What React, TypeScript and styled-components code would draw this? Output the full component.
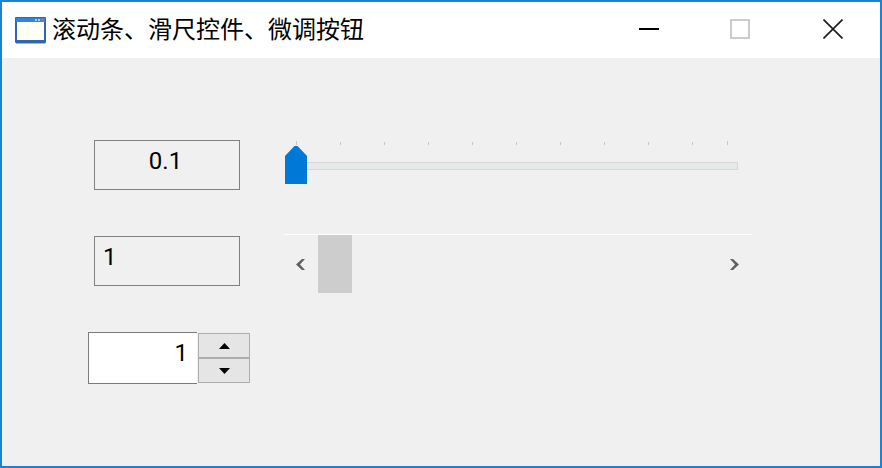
import React from "react";
import styled, { createGlobalStyle } from "styled-components";

const GlobalStyle = createGlobalStyle`
  html, body {
    margin: 0;
    padding: 0;
    background: #f0f0f0;
  }
  * {
    box-sizing: border-box;
  }
`;

const Frame = styled.div`
  width: 882px;
  height: 468px;
  border: 2px solid #1883d7;
  background: #f0f0f0;
  font-family: "Liberation Sans", "Noto Sans CJK SC", sans-serif;
  color: #000;
  display: flex;
  flex-direction: column;
`;

const TitleBar = styled.div`
  height: 56px;
  background: #fff;
  display: flex;
  align-items: center;
  padding: 0 1px 0 13px;
  flex-shrink: 0;
`;

const Title = styled.div`
  font-size: 24px;
  margin-left: 6px;
  flex: 1;
  line-height: 56px;
  white-space: nowrap;
`;

const Caption = styled.div<{ $width: number }>`
  width: ${(p) => p.$width}px;
  height: 56px;
  padding-bottom: 2px;
  display: flex;
  align-items: center;
  justify-content: center;
`;

const Client = styled.div`
  flex: 1;
  padding-top: 82px;
  display: flex;
  flex-direction: column;
`;

const Row = styled.div<{ $height: number }>`
  display: flex;
  height: ${(p) => p.$height}px;
`;

const Readout = styled.div<{ $center?: boolean }>`
  width: 146px;
  height: 50px;
  margin-left: 92px;
  border: 1px solid #808080;
  font-family: Roboto, "Liberation Sans", sans-serif;
  font-size: 24px;
  line-height: 40px;
  padding: ${(p) => (p.$center ? "0 3px 0 0" : "0 0 0 8px")};
  text-align: ${(p) => (p.$center ? "center" : "left")};
`;

const Slider = styled.div`
  position: relative;
  width: 453px;
  height: 50px;
  margin-left: 45px;
`;

const Tick = styled.span<{ $tall?: boolean }>`
  position: absolute;
  top: ${(p) => (p.$tall ? 1 : 2)}px;
  width: 1px;
  height: ${(p) => (p.$tall ? 4 : 3)}px;
  background: #c8c8c8;
`;

const Track = styled.div`
  position: absolute;
  left: 0;
  right: 0;
  top: 22px;
  height: 8px;
  background: #e7eaea;
  border: 1px solid #d6d6d6;
`;

const Thumb = styled.svg`
  position: absolute;
  left: 0;
  top: 5px;
  display: block;
`;

const ScrollBar = styled.div`
  width: 468px;
  height: 60px;
  margin-left: 44px;
  margin-top: -2px;
  border-top: 1px solid #fff;
  display: flex;
  align-items: stretch;
`;

const ScrollArrow = styled.div`
  width: 34px;
  display: flex;
  align-items: center;
  justify-content: center;
  flex-shrink: 0;
`;

const ScrollThumb = styled.div`
  width: 34px;
  height: 58px;
  background: #cdcdcd;
`;

const ScrollGap = styled.div`
  flex: 1;
`;

const SpinInput = styled.div`
  width: 109px;
  height: 52px;
  margin: 0 1px 0 86px;
  background: #fff;
  border: 1px solid #7a7a7a;
  border-right: none;
  font-family: Roboto, "Liberation Sans", sans-serif;
  font-size: 24px;
  line-height: 40px;
  text-align: right;
  padding-right: 9px;
`;

const SpinButtons = styled.div`
  width: 52px;
  height: 50px;
  margin-top: 1px;
  display: flex;
  flex-direction: column;
`;

const SpinButton = styled.div`
  height: 25px;
  background: #e5e5e5;
  border: 1px solid #adadad;
  display: flex;
  align-items: center;
  justify-content: center;
`;

const WindowIcon = () => (
  <svg width="31" height="27" viewBox="0 0 31 27">
    <rect x="0" y="0" width="31" height="26" rx="1" fill="#2f66b4" />
    <rect x="1" y="1" width="29" height="4" fill="#2f86dc" />
    <rect x="2" y="5" width="27" height="18" fill="#fffff6" />
    <rect x="20" y="2" width="2" height="2" fill="#a9cdf0" />
    <rect x="23" y="2" width="2" height="2" fill="#a9cdf0" />
    <rect x="26" y="2" width="3" height="2" fill="#e2622e" />
    <rect x="1" y="26" width="29" height="1" fill="#a9b4c8" />
  </svg>
);

const MinimizeIcon = () => (
  <svg width="20" height="20" viewBox="0 0 20 20">
    <rect x="0" y="9" width="20" height="2" fill="#000" />
  </svg>
);

const MaximizeIcon = () => (
  <svg width="20" height="20" viewBox="0 0 20 20">
    <rect x="1" y="1" width="18" height="18" fill="none" stroke="#cccccc" strokeWidth="2" />
  </svg>
);

const CloseIcon = () => (
  <svg width="20" height="20" viewBox="0 0 20 20">
    <path d="M0.5 0.5 L19.5 19.5 M19.5 0.5 L0.5 19.5" stroke="#1a1a1a" strokeWidth="1.6" fill="none" />
  </svg>
);

const Chevron = ({ right }: { right?: boolean }) => (
  <svg width="10" height="11" viewBox="0 0 10 11">
    <path
      d={right ? "M0 0 H3 L9 5.5 L3 11 H0 L5 5.5 Z" : "M6 0 H9 L4 5.5 L9 11 H6 L0 5.5 Z"}
      fill="#606060"
    />
  </svg>
);

const ticks = [11, 55, 99, 143, 187, 231, 275, 319, 363, 407, 442];

export default function App() {
  return (
    <>
      <GlobalStyle />
      <Frame>
        <TitleBar>
          <WindowIcon />
          <Title>滚动条、滑尺控件、微调按钮</Title>
          <Caption $width={88}>
            <MinimizeIcon />
          </Caption>
          <Caption $width={94}>
            <MaximizeIcon />
          </Caption>
          <Caption $width={92}>
            <CloseIcon />
          </Caption>
        </TitleBar>
        <Client>
          <Row $height={96}>
            <Readout $center>0.1</Readout>
            <Slider>
              {ticks.map((x, i) => (
                <Tick key={x} $tall={i === 0 || i === ticks.length - 1} style={{ left: x }} />
              ))}
              <Track />
              <Thumb width="22" height="39" viewBox="0 0 22 39">
                <path d="M9.5 1 H12.5 L22 11 V39 H0 V11 Z" fill="#0078d7" />
              </Thumb>
            </Slider>
          </Row>
          <Row $height={96}>
            <Readout>1</Readout>
            <ScrollBar>
              <ScrollArrow>
                <Chevron />
              </ScrollArrow>
              <ScrollThumb />
              <ScrollGap />
              <ScrollArrow>
                <Chevron right />
              </ScrollArrow>
            </ScrollBar>
          </Row>
          <Row $height={52}>
            <SpinInput>1</SpinInput>
            <SpinButtons>
              <SpinButton>
                <svg width="11" height="6" viewBox="0 0 11 6">
                  <path d="M5.5 0 L11 6 H0 Z" fill="#000" />
                </svg>
              </SpinButton>
              <SpinButton>
                <svg width="11" height="6" viewBox="0 0 11 6">
                  <path d="M0 0 H11 L5.5 6 Z" fill="#000" />
                </svg>
              </SpinButton>
            </SpinButtons>
          </Row>
        </Client>
      </Frame>
    </>
  );
}
